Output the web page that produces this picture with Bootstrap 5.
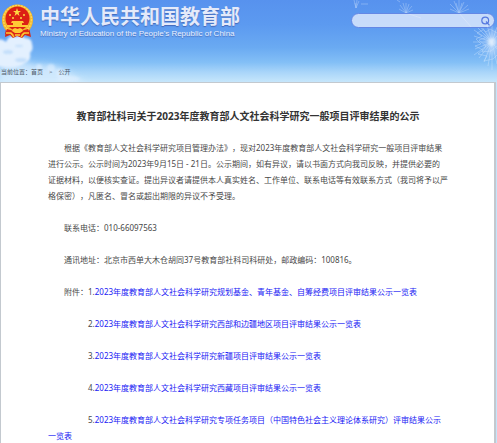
<!DOCTYPE html>
<html lang="zh-CN">
<head>
<meta charset="utf-8">
<meta name="viewport" content="width=device-width, initial-scale=1">
<title>中华人民共和国教育部</title>
<link href="https://cdn.jsdelivr.net/npm/bootstrap@5.3.0/dist/css/bootstrap.min.css" rel="stylesheet">
<style>
body{font-family:"Noto Sans","Noto Sans CJK SC",sans-serif;font-size:8px;line-height:16px;color:#484848;background:#c4e5fb}
.site-head{background:linear-gradient(#5792ee 0,#5c9af0 30%,#6aaaf2 58%,#83bff6 76%,#a9d5f9 88%,#c6e6fb 100%);height:82px;overflow:hidden}
.sky{top:0;pointer-events:none}
.sky-l{left:0}
.sky-r{right:0}
.brand-row{padding:4px 2px 0 1px}
.brand-link{gap:6px}
.brand-cn{font-size:20px;line-height:25px;font-weight:700;color:#e4eafa;text-shadow:0 1px 1px #4469b8}
.brand-en{font:8px/10px "Liberation Sans",sans-serif;color:#eaf1ff;text-shadow:0 1px 1px #4469b8}
.search-box{width:144px;height:15px;margin-top:9px;border:1px solid #6387e5;border-radius:8px;background:rgba(235,241,253,.75)}
.search-box input{min-width:0;font-size:8px;outline:0}
.crumb-bar{font-size:6px;line-height:12px;padding-left:1px;color:#4c5866;bottom:4px}
.crumb-bar a{color:inherit}
.crumb-list{gap:6px}
.doc-sheet{border:1px solid #c3c9cf;border-width:1px 2px 0 1px;margin-right:1px;padding:25px 46px 0 47px;text-spacing-trim:space-all}
.doc-title{font-size:10px;line-height:16px;font-weight:700;color:#333;margin-bottom:16px}
.doc-sheet p{text-indent:2em;margin-bottom:16px}
.doc-sheet p.follow{text-indent:5em}
.doc-sheet p.last{margin-bottom:0}
.doc-sheet p a{color:#2020f4}
</style>
<script src="https://cdn.jsdelivr.net/npm/bootstrap@5.3.0/dist/js/bootstrap.bundle.min.js"></script>
</head>
<body class="d-flex flex-column min-vh-100">
<header class="site-head position-relative flex-shrink-0">
  <svg class="sky sky-l position-absolute" width="130" height="82" viewBox="0 0 130 82" aria-hidden="true">
    <defs><filter id="soft" x="-30%" y="-30%" width="160%" height="160%"><feGaussianBlur stdDeviation="1"/></filter>
    <filter id="haze" x="-20%" y="-40%" width="140%" height="180%"><feGaussianBlur stdDeviation="3"/></filter></defs>
    <path d="M0 60Q20 58 34 64Q58 64 68 72L88 84H0Z" fill="#dcefff" opacity=".7" filter="url(#haze)"/>
    <g fill="#e3f0fe" filter="url(#soft)"><path d="M-3 40Q2 38 6 42Q9 34 16 37Q21 34 25 38Q32 38 32 44Q34 49 30 53Q32 60 25 63Q16 70 -3 66Z"/></g>
    <g fill="#bbdaf9" filter="url(#soft)" opacity=".8"><ellipse cx="8" cy="52" rx="5" ry="2"/><ellipse cx="21" cy="60" rx="6" ry="2"/><ellipse cx="19" cy="46" rx="4" ry="1"/></g>
    <g fill="#dfefff" filter="url(#soft)" opacity=".6"><circle cx="39" cy="67" r="3"/><circle cx="51" cy="68" r="4"/><circle cx="60" cy="73" r="4"/><ellipse cx="68" cy="79" rx="12" ry="3"/></g>
  </svg>
  <svg class="sky sky-r position-absolute" width="150" height="82" viewBox="0 0 150 82" fill="none" stroke="#e4f1ff" stroke-width=".5" aria-hidden="true">
    <g opacity=".6"><path d="M9 8L7 0M9 8L10 0M9 8L12 1M9 8L8 3M14 4L21 4M50 0L53 2"/>
    <path d="M59 13L53 5M59 13L56 3M59 13L59 3M59 13L62 4M59 13L65 6M59 13L52 9M59 13L66 10"/>
    <path d="M112 13L103 4M112 13L107 1M112 13L112 0M112 13L117 2M112 13L121 5M112 13L103 9M112 13L122 9M112 13L109 3M112 13L115 3"/></g>
    <path d="M59 13L74 18M112 13L125 28" stroke="#cbd4e4"/>
    <g opacity=".65"><path d="M145 42L127 30M145 42L130 27M145 42L135 27M145 42L140 25M145 42L145 26M145 42L150 27M145 42L127 36M145 42L126 42M145 42L128 49M145 42L127 55M145 42L132 58M145 42L137 62M145 42L141 66M145 42L145 70M145 42L150 64M145 42L150 36M145 42L150 49"/>
    <path d="M136 30L130 33L135 36L129 39L134 44L128 46L136 50L131 54L140 56L137 61L146 59L150 55M133 27L139 32L143 29L150 33M138 38L132 40L139 46L135 52L144 51L150 46"/></g>
    <ellipse cx="146" cy="43" rx="8" ry="13" fill="#d8eaff" stroke="none" opacity=".5" filter="url(#haze)"/>
    <circle cx="145" cy="42" r="4" fill="#edf6ff" stroke="none" opacity=".6" filter="url(#soft)"/>
  </svg>
  <div class="brand-row d-flex justify-content-between align-items-start position-relative">
    <a class="brand-link d-flex text-decoration-none" href="#">
      <svg width="33" height="35" viewBox="0 0 33 35" role="img" aria-label="国徽">
        <path d="M5 23L4 33L9 31L12 34L16 32L21 34L24 31L30 33L28 23Z" fill="#d62a16"/>
        <circle cx="16.500" cy="16" r="15.500" fill="#f2b62c"/>
        <circle cx="16.500" cy="15.500" r="14" fill="none" stroke="#ffd557" stroke-width="1.500" stroke-dasharray="2 1"/>
        <circle cx="16.500" cy="14.500" r="12" fill="#dc1f15"/>
        <path d="M16 4L17 7H20L17.500 8.800L18.500 12L16 10L13.500 12L14.500 8.800L12 7H15Z" fill="#ffda43"/>
        <g fill="#ffda43"><circle cx="9" cy="11" r="1"/><circle cx="12" cy="14" r="1"/><circle cx="20" cy="14" r="1"/><circle cx="23" cy="11" r="1"/></g>
        <path d="M11 17H22L23 19H21V21H27V23H6V21H12V19H10Z" fill="#ffc935"/>
        <path d="M6 25Q16 29 27 25L29 30L22 29L19 32H14L11 29L4 30Z" fill="#dc2417"/>
        <path d="M12 25L14 24L16.500 25L19 24L21 25L22 27L19 29H14L11 27Z" fill="#ffc935"/>
        <path d="M5 29L10 29L13 33M28 29L23 29L20 33M14 31H19" fill="none" stroke="#ffc935" stroke-width="1.300"/>
      </svg>
      <span class="d-flex flex-column">
        <span class="brand-cn">中华人民共和国教育部</span>
        <span class="brand-en">Ministry of Education of the People's Republic of China</span>
      </span>
    </a>
    <form class="search-box d-flex align-items-center" role="search">
      <input class="flex-grow-1 border-0 bg-transparent py-0 px-2" type="text" aria-label="搜索">
      <button class="btn border-0 p-0 d-flex me-1" type="button" aria-label="搜索">
        <svg width="9" height="10" viewBox="0 0 9 10" fill="none" stroke="#5578df" stroke-width="1.200"><circle cx="4.200" cy="4.500" r="3.400"/><path d="M5 5.500L8.500 9.300"/></svg>
      </button>
    </form>
  </div>
  <nav class="crumb-bar position-absolute start-0" aria-label="当前位置">
    <div class="crumb-list d-flex"><span>当前位置：<a class="text-decoration-none" href="#">首页</a></span><span>&gt;</span><a class="text-decoration-none" href="#">公开</a></div>
  </nav>
</header>
<main class="doc-sheet bg-white flex-grow-1">
  <h1 class="doc-title text-center">教育部社科司关于2023年度教育部人文社会科学研究一般项目评审结果的公示</h1>
  <p>根据《教育部人文社会科学研究项目管理办法》，现对2023年度教育部人文社会科学研究一般项目评审结果进行公示。公示时间为2023年9月15日 - 21日。公示期间，如有异议，请以书面方式向我司反映，并提供必要的<span class="text-nowrap">证据材料</span>，以便核实查证。提出异议者请提供本人真实姓名、工作单位、联系电话等有效联系方式（我司将予以严格保密），凡匿名、冒名或超出期限的异议不予受理。</p>
  <p>联系电话：010-66097563</p>
  <p>通讯地址：北京市西单大木仓胡同37号教育部社科司科研处，邮政编码：100816。</p>
  <p>附件：1.<a class="text-decoration-none" href="#">2023年度教育部人文社会科学研究规划基金、青年基金、自筹经费项目评审结果公示一览表</a></p>
  <p class="follow">2.<a class="text-decoration-none" href="#">2023年度教育部人文社会科学研究西部和边疆地区项目评审结果公示一览表</a></p>
  <p class="follow">3.<a class="text-decoration-none" href="#">2023年度教育部人文社会科学研究新疆项目评审结果公示一览表</a></p>
  <p class="follow">4.<a class="text-decoration-none" href="#">2023年度教育部人文社会科学研究西藏项目评审结果公示一览表</a></p>
  <p class="follow last">5.<a class="text-decoration-none" href="#">2023年度教育部人文社会科学研究专项任务项目（中国特色社会主义理论体系研究）评审结果公示一览表</a></p>
</main>
</body>
</html>
